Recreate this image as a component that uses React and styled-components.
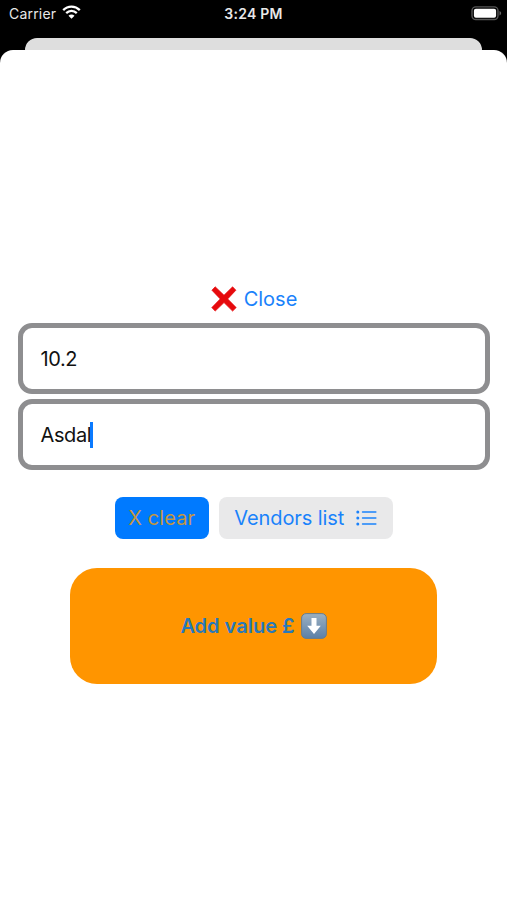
import React from "react"
import styled, { createGlobalStyle } from "styled-components";

const App = () => {
  return (
    <Screen>
      <GlobalStyle />
      <StatusBar>
        <Carrier>
          <span>Carrier</span>
          <WifiIcon />
        </Carrier>
        <Time>3:24 PM</Time>
        <BatteryIcon />
      </StatusBar>
      <BackCard />
      <Sheet>
        <CloseButton>
          <CrossIcon />
          <span>Close</span>
        </CloseButton>
        <Fields>
          <Field $spacing="-0.4px">10.2</Field>
          <Field $spacing="-0.4px">
            Asdal
            <Caret />
          </Field>
        </Fields>
        <Actions>
          <ActionButton $width="94.5px" $background="#007aff" $color="#c3963f" $spacing="0.1px">
            X clear
          </ActionButton>
          <ActionButton $width="173.5px" $background="#e9e9ea" $color="#1a82fb" $spacing="-0.1px">
            Vendors list
            <ListIcon />
          </ActionButton>
        </Actions>
        <AddButton>
          <span>Add value £</span>
          <DownIcon />
        </AddButton>
      </Sheet>
    </Screen>
  )
}

const WifiIcon = () => (
  <svg width="19" height="14" viewBox="0 0 19 14" fill="none" stroke="#fff" strokeWidth="2.3">
    <path d="M1.2 5.1C5.9 0.4 13.1 0.4 17.8 5.1" />
    <path d="M4.2 8.2C7.3 5.2 11.7 5.2 14.8 8.2" />
    <path d="M6.5 10.7C8.2 9.1 10.8 9.1 12.5 10.7L9.5 13.7Z" fill="#fff" stroke="none" />
  </svg>
)

const BatteryIcon = () => (
  <svg width="31" height="15" viewBox="0 0 31 15">
    <rect x="1" y="0.9" width="26" height="12.6" rx="3.8" fill="none" stroke="#565656" strokeWidth="1.4" />
    <rect x="2.9" y="2.8" width="22.2" height="8.9" rx="2" fill="#fff" />
    <path d="M28.5 5.1C30.7 6 30.7 8.5 28.5 9.4Z" fill="#646464" />
  </svg>
)

const CrossIcon = () => (
  <svg width="26" height="26" viewBox="0 0 26 26">
    <path
      d="M4.2 0.8L13 9.2L21.6 0.8L24.9 4.2L16.7 12.9L25.2 21.6L21.6 25.1L13 16.6L4.2 25.1L0.8 21.6L9.2 12.9L0.9 4.2Z"
      fill="#e60a0d"
      stroke="#e60a0d"
      strokeWidth="0.7"
      strokeLinejoin="round"
    />
  </svg>
)

const ListIcon = () => (
  <svg width="21" height="16" viewBox="0 0 21 16" stroke="#1a82fb" strokeLinecap="round">
    <path d="M6.6 2H19.8M6.6 8H19.8M6.6 14H19.8" strokeWidth="1.6" />
    <path d="M1.8 2H1.81M1.8 8H1.81M1.8 14H1.81" strokeWidth="3" />
  </svg>
)

const DownIcon = () => (
  <svg width="26" height="26" viewBox="0 0 26 26">
    <defs>
      <linearGradient id="key" x1="0" y1="0" x2="0" y2="1">
        <stop offset="0" stopColor="#9cb0c1" />
        <stop offset="1" stopColor="#5b80a7" />
      </linearGradient>
    </defs>
    <rect x="0.6" y="0.6" width="24.8" height="24.8" rx="4.5" fill="url(#key)" stroke="#687d8c" strokeWidth="1" />
    <path d="M10.5 5H15.5V12.7H19.8L13 21L6.2 12.7H10.5Z" fill="#fff" />
  </svg>
)

const GlobalStyle = createGlobalStyle`
  * {
    box-sizing: border-box;
  }
  body {
    margin: 0;
    background: #000;
  }
  `
const Screen = styled.div`
  display: flex;
  flex-direction: column;
  height: 900px;
  overflow: hidden;
  background: #000;
  font-family: Inter, "Liberation Sans", sans-serif;
  font-size: 20px;
  `
const StatusBar = styled.header`
  display: grid;
  grid-template-columns: 1fr auto 1fr;
  align-items: center;
  flex: none;
  height: 27px;
  margin-bottom: 10.5px;
  padding: 0 5px 0 9px;
  color: #e8e8e8;
  > svg {
    justify-self: end;
  }
  `
const Carrier = styled.div`
  display: flex;
  align-items: center;
  gap: 6px;
  font-size: 14px;
  letter-spacing: 0.2px;
  svg {
    margin-top: -3px;
  }
  `
const Time = styled.div`
  margin-right: 4px;
  font-size: 14px;
  font-weight: 600;
  letter-spacing: 0.25px;
  `
const BackCard = styled.div`
  flex: none;
  height: 12.5px;
  margin: 0 25px;
  background: #dedede;
  border-radius: 12px 12px 0 0;
  `
const Sheet = styled.main`
  display: flex;
  flex-direction: column;
  align-items: center;
  flex: 1;
  padding: 230px 17.5px 0;
  background: #fff;
  border-radius: 13px 13px 0 0;
  `
const CloseButton = styled.button`
  display: flex;
  align-items: center;
  gap: 7px;
  height: 37px;
  padding: 0 0 0 1px;
  border: none;
  background: none;
  color: #1a82fb;
  font: inherit;
  `
const Fields = styled.div`
  display: flex;
  flex-direction: column;
  gap: 5px;
  width: 100%;
  margin-top: 6px;
  `
const Field = styled.div`
  display: flex;
  align-items: center;
  height: 71px;
  padding: 0 18px;
  border: 5px solid #8e8e90;
  border-radius: 14px;
  color: #111;
  letter-spacing: ${props => props.$spacing};
  `
const Caret = styled.span`
  width: 2.5px;
  height: 26px;
  margin-left: -1px;
  background: #0a7aff;
  `
const Actions = styled.div`
  display: flex;
  gap: 10px;
  margin-top: 26.5px;
  `
const ActionButton = styled.button`
  display: flex;
  align-items: center;
  justify-content: center;
  gap: 12px;
  width: ${props => props.$width};
  height: 42px;
  padding: 0;
  border: none;
  border-radius: 8px;
  background: ${props => props.$background};
  color: ${props => props.$color};
  font: inherit;
  letter-spacing: ${props => props.$spacing};
  white-space: nowrap;
  `
const AddButton = styled.button`
  display: flex;
  align-items: center;
  justify-content: center;
  gap: 6px;
  width: 367px;
  height: 116px;
  margin-top: 29px;
  padding: 0;
  border: none;
  border-radius: 27px;
  background: #ff9500;
  color: #2879bb;
  font: inherit;
  font-weight: 600;
  `
export default App;
